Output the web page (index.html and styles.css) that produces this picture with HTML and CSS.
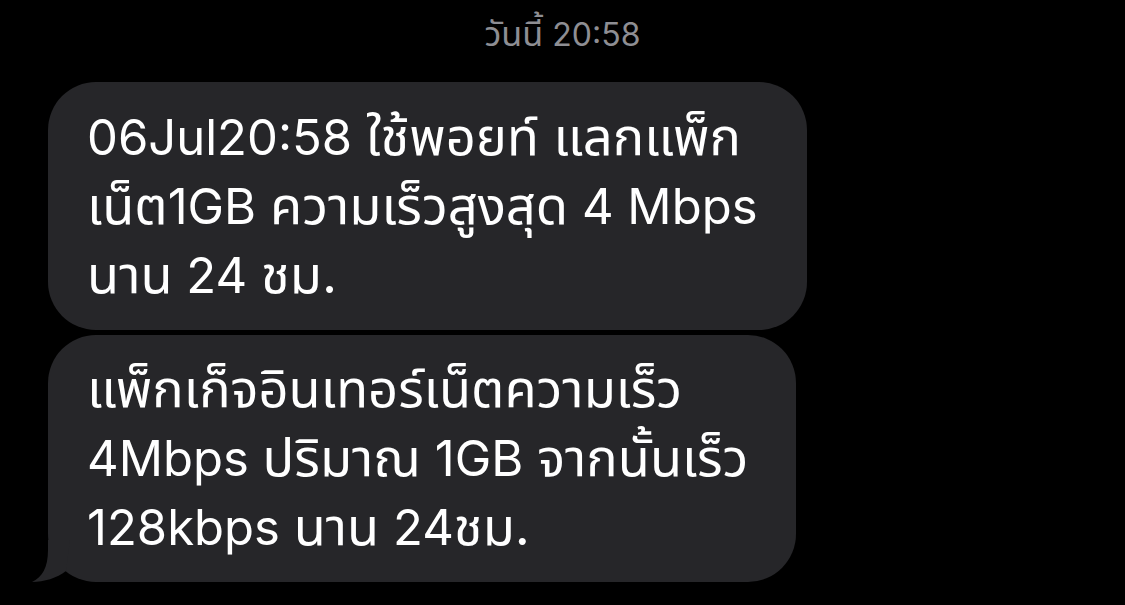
FILE: index.html
```html
<!DOCTYPE html>
<html>
<head>
  <meta charset="UTF-8">
  <title>Messages</title>
  <link rel="stylesheet" href="styles.css">
</head>
<body>
  <div class="stamp"><span class="th">วันนี้</span> 20:58</div>
  <div class="thread">
    <div class="bubble first">
      06Jul20:58 <span class="th">ใช้พอยท์ แลกแพ็ก</span><br>
      <span class="th">เน็ต</span>1GB <span class="th">ความเร็วสูงสุด</span> 4 Mbps<br>
      <span class="th">นาน</span> 24 <span class="th">ชม.</span>
    </div>
    <div class="bubble last">
      <span class="th">แพ็กเก็จอินเทอร์เน็ตความเร็ว</span><br>
      4Mbps <span class="th">ปริมาณ</span> 1GB <span class="th">จากนั้นเร็ว</span><br>
      128kbps <span class="th">นาน</span> 24<span class="th">ชม.</span>
      <svg class="tail" width="70" height="42" viewBox="0 0 70 42">
        <path d="M18 4 L18 10 C18 28 12 37 2 42 C14 42 27 38 36 31 L40 0 L18 0 Z" fill="#262629"/>
      </svg>
    </div>
  </div>
</body>
</html>
```

FILE: styles.css
```css
body {
  margin: 0;
  padding: 16px 0 0;
  background-color: #000;
  font-family: Inter, "Liberation Sans", "Noto Sans Thai", sans-serif;
  color: #fff;
}

.th {
  font-size: 1.07em;
  line-height: 1;
}

.stamp {
  text-align: center;
  color: #8e8e93;
  font-size: 32px;
  line-height: 37px;
}

.thread {
  margin-top: 29px;
  padding-left: 48px;
  display: flex;
  flex-direction: column;
  gap: 5px;
}

.bubble {
  position: relative;
  box-sizing: border-box;
  background-color: #262629;
  border-radius: 48px;
  padding: 20px 40px 20px 39px;
  font-size: 49px;
  line-height: 69px;
  white-space: nowrap;
}

.bubble.first {
  width: 759px;
  padding-top: 21px;
}

.bubble.last {
  width: 748px;
}

.tail {
  position: absolute;
  left: -18px;
  bottom: 0;
}
```
